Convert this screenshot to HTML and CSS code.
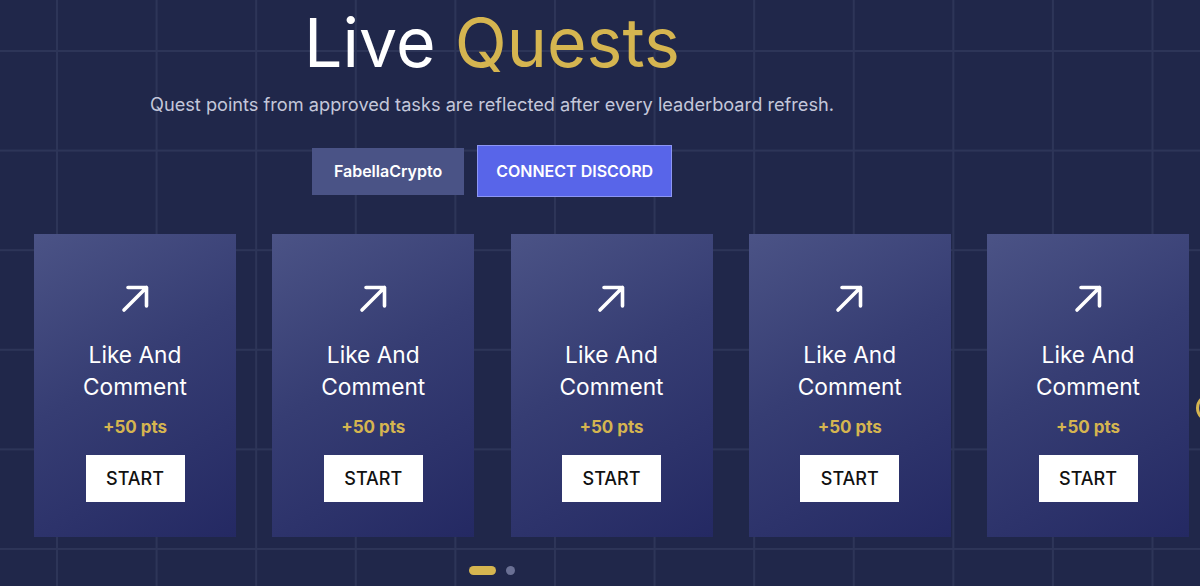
FILE: index.html
```html
<!DOCTYPE html>
<html lang="en">
<head>
  <meta charset="UTF-8" />
  <meta name="viewport" content="width=device-width, initial-scale=1.0"/>
  <title>Live Quests</title>
  <link rel="stylesheet" href="styles.css">
</head>
<body>
  <div class="page">
    <div class="hero">
      <h1 class="title">Live <span class="gold">Quests</span></h1>
      <p class="subtitle">Quest points from approved tasks are reflected after every leaderboard refresh.</p>
      <div class="actions">
        <button class="btn-user">FabellaCrypto</button>
        <button class="btn-discord">CONNECT DISCORD</button>
      </div>
    </div>

    <!-- quest carousel -->
    <div class="carousel">
      <div class="track">
        <div class="card">
          <svg class="icon" viewBox="0 0 29 29"><path d="M3 26 L25.5 3.5 M7 3.5 H25.5 V22"/></svg>
          <div class="card-title">Like And<br>Comment</div>
          <div class="pts">+50 pts</div>
          <button class="start">START</button>
        </div>
        <div class="card">
          <svg class="icon" viewBox="0 0 29 29"><path d="M3 26 L25.5 3.5 M7 3.5 H25.5 V22"/></svg>
          <div class="card-title">Like And<br>Comment</div>
          <div class="pts">+50 pts</div>
          <button class="start">START</button>
        </div>
        <div class="card">
          <svg class="icon" viewBox="0 0 29 29"><path d="M3 26 L25.5 3.5 M7 3.5 H25.5 V22"/></svg>
          <div class="card-title">Like And<br>Comment</div>
          <div class="pts">+50 pts</div>
          <button class="start">START</button>
        </div>
        <div class="card">
          <svg class="icon" viewBox="0 0 29 29"><path d="M3 26 L25.5 3.5 M7 3.5 H25.5 V22"/></svg>
          <div class="card-title">Like And<br>Comment</div>
          <div class="pts">+50 pts</div>
          <button class="start">START</button>
        </div>
        <div class="card">
          <svg class="icon" viewBox="0 0 29 29"><path d="M3 26 L25.5 3.5 M7 3.5 H25.5 V22"/></svg>
          <div class="card-title">Like And<br>Comment</div>
          <div class="pts">+50 pts</div>
          <button class="start">START</button>
        </div>
      </div>
      <span class="next"></span>
    </div>

    <div class="dots">
      <span class="dot active"></span>
      <span class="dot"></span>
    </div>
  </div>
</body>
</html>
```

FILE: styles.css
```css
html, body {
  margin: 0;
  padding: 0;
  height: 100%;
  overflow: hidden;
}

body {
  font-family: Inter, "Noto Sans", sans-serif;
  background-color: #20274a;
  background-image:
    linear-gradient(to right, #2d3558 1.5px, transparent 1.5px),
    linear-gradient(to bottom, #2d3558 1.5px, transparent 1.5px);
  background-size: 99.6px 99.6px;
  background-position: 56px 50px;
  color: #fff;
}

.page {
  width: 1200px;
  position: relative;
}

.hero {
  width: 984px;
  text-align: center;
  padding-top: 7px;
}

.title {
  margin: 0;
  font-size: 68px;
  line-height: 70px;
  font-weight: 400;
  color: #fff;
}

.gold {
  color: #d5b550;
}

.subtitle {
  margin: 16px 0 0;
  font-size: 18.2px;
  line-height: 22px;
  color: #c4c7da;
}

.actions {
  display: flex;
  justify-content: center;
  align-items: center;
  gap: 13px;
  margin-top: 30px;
}

.actions button {
  font-family: inherit;
  font-size: 16px;
  font-weight: 600;
  color: #fff;
  cursor: pointer;
}

.btn-user {
  height: 47px;
  padding: 0 22px;
  background: #4a5386;
  border: none;
}

.btn-discord {
  height: 52px;
  padding: 0 18px;
  background: #5865e9;
  border: 1px solid #8d96f4;
}

.carousel {
  position: relative;
  margin-top: 37px;
  padding-left: 34px;
}

.track {
  display: flex;
  gap: 36.25px;
}

.card {
  flex: 0 0 202px;
  height: 303px;
  box-sizing: border-box;
  padding-top: 50px;
  display: flex;
  flex-direction: column;
  align-items: center;
  background: linear-gradient(150deg, #4b5386 0%, #363d73 45%, #242963 100%);
}

.icon {
  width: 29px;
  height: 29px;
  fill: none;
  stroke: #fff;
  stroke-width: 3.6;
  stroke-linecap: round;
  stroke-linejoin: round;
}

.card-title {
  margin-top: 26px;
  font-size: 22.7px;
  line-height: 32px;
  text-align: center;
}

.pts {
  margin-top: 13px;
  font-size: 17px;
  font-weight: 700;
  line-height: 22px;
  color: #d5b550;
}

.start {
  margin-top: 17px;
  width: 99px;
  height: 47px;
  background: #fff;
  border: none;
  font-family: inherit;
  font-size: 18px;
  font-weight: 500;
  color: #111;
  cursor: pointer;
}

/* peeking next arrow, mostly off screen */
.next {
  position: absolute;
  left: 1196px;
  top: 160px;
  width: 22px;
  height: 22px;
  border-radius: 50%;
  border: 3px solid #d5b550;
  background: #2a3060;
}

.dots {
  display: flex;
  justify-content: center;
  align-items: center;
  gap: 10px;
  width: 984px;
  margin-top: 29px;
}

.dot {
  width: 9px;
  height: 9px;
  border-radius: 5px;
  background: #6a7094;
}

.dot.active {
  width: 27px;
  background: #d5b550;
}
```
